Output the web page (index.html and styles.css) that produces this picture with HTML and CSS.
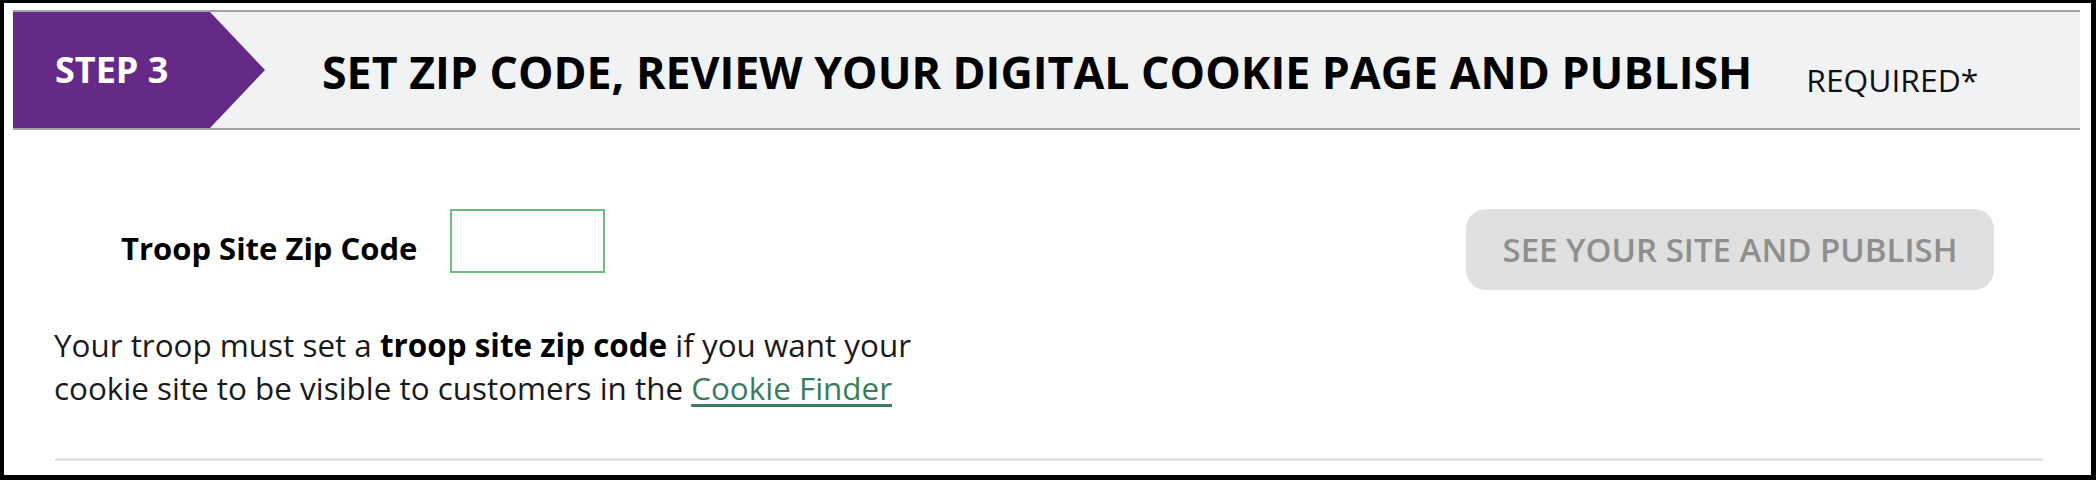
FILE: index.html
```html
<!DOCTYPE html>
<html>
<head>
<meta charset="utf-8">
<link rel="stylesheet" href="styles.css">
</head>
<body>
<div class="frame">
  <div class="header">
    <div class="step">STEP 3</div>
    <div class="heading">
      <h2 class="title">SET ZIP CODE, REVIEW YOUR DIGITAL COOKIE PAGE AND PUBLISH</h2>
      <span class="required">REQUIRED*</span>
    </div>
  </div>
  <div class="body">
    <div class="left">
      <div class="zip-row">
        <label class="zip-label">Troop Site Zip Code</label>
        <input class="zip-input" type="text">
      </div>
      <p class="note">Your troop must set a <b>troop site zip code</b> if you want your<br>cookie site to be visible to customers in the <a href="#">Cookie Finder</a></p>
    </div>
    <button class="publish" disabled>SEE YOUR SITE AND PUBLISH</button>
  </div>
  <div class="divider"></div>
</div>
</body>
</html>
```
FILE: styles.css
```css
html, body {
  margin: 0;
  padding: 0;
  background: #fff;
}
body {
  font-family: "Open Sans", "Liberation Sans", sans-serif;
}
.frame {
  box-sizing: border-box;
  width: 2096px;
  height: 480px;
  border-style: solid;
  border-color: #000;
  border-width: 3px 5px 5px 4px;
  background: #fff;
  padding: 7px 11px 0 9px;
}
.header {
  display: flex;
  align-items: center;
  height: 120px;
  box-sizing: border-box;
  background: #f1f2f4;
  border-top: 2px solid #a3a3a3;
  border-bottom: 2px solid #a3a3a3;
}
.step {
  align-self: stretch;
  width: 252px;
  box-sizing: border-box;
  background: #652a87;
  clip-path: polygon(0 0, 197px 0, 252px 50%, 197px 100%, 0 100%);
  color: #fff;
  font-weight: 700;
  font-size: 36px;
  display: flex;
  align-items: center;
  padding-left: 42px;
  padding-bottom: 2px;
}
.heading {
  display: flex;
  align-items: baseline;
  margin-left: 57px;
  padding-top: 2px;
}
.title {
  margin: 0;
  font-size: 44.7px;
  font-weight: 700;
  color: #000;
}
.required {
  margin-left: 54px;
  font-size: 31.8px;
  color: #111;
  position: relative;
  top: 3px;
}
.body {
  display: flex;
  justify-content: space-between;
  align-items: flex-start;
  padding: 79px 86px 0 41px;
}
.zip-row {
  display: flex;
  align-items: flex-start;
  padding-left: 67px;
}
.zip-label {
  font-weight: 700;
  font-size: 31px;
  line-height: 40px;
  padding-top: 19px;
  color: #000;
  width: 329px;
}
.zip-input {
  box-sizing: border-box;
  width: 155px;
  height: 64px;
  border: 2px solid #6cbf7a;
  background: #fff;
  margin: 0;
  outline: none;
}
.note {
  margin: 50px 0 0 0;
  font-size: 31.4px;
  line-height: 43px;
  color: #1a1a1a;
}
.note b {
  font-weight: 700;
  color: #000;
}
.note a {
  color: #3a7d5e;
  text-decoration: underline;
  text-underline-offset: 4px;
}
.publish {
  width: 528px;
  height: 81px;
  border: none;
  border-radius: 20px;
  background: #e0e0e0;
  color: #8e8e8e;
  font-family: "Open Sans", "Liberation Sans", sans-serif;
  font-size: 33px;
  font-weight: 600;
  padding: 0;
}
.divider {
  margin: 49px 37px 0 42px;
  height: 3px;
  background: #e2e3e5;
}
```
